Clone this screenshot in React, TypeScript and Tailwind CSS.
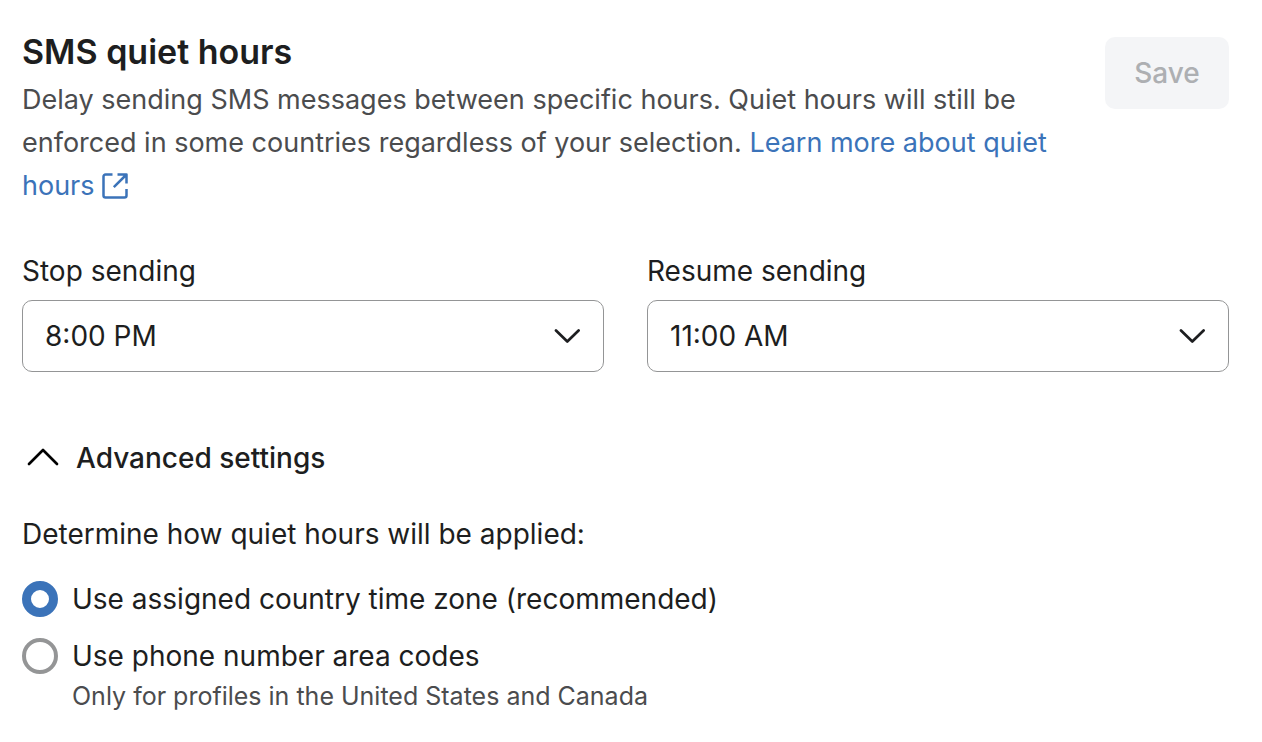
import React, { useState } from "react";

const times = ["8:00 PM", "9:00 PM", "10:00 PM", "8:00 AM", "9:00 AM", "11:00 AM"];

const TimeSelect = ({
  id,
  label,
  initial,
}: {
  id: string;
  label: string;
  initial: string;
}) => {
  const [value, setValue] = useState(initial);

  return (
    <div>
      <label htmlFor={id} className="block text-[28px] leading-9">
        {label}
      </label>
      <div className="relative mt-[11px]">
        <select
          id={id}
          value={value}
          onChange={(e) => setValue(e.target.value)}
          className="h-18 w-full appearance-none rounded-[10px] border border-[#949596] bg-white px-[22px] text-[28px]"
        >
          {times.map((time) => (
            <option key={time}>{time}</option>
          ))}
        </select>
        <svg
          viewBox="0 0 26 16"
          className="pointer-events-none absolute top-7 right-6 h-4 w-[26px]"
          fill="none"
          stroke="currentColor"
          strokeWidth="2.7"
          strokeLinecap="round"
          strokeLinejoin="round"
        >
          <path d="M2 2.5l11.3 11L24.6 2.5" />
        </svg>
      </div>
    </div>
  );
};

const RadioOption = ({
  id,
  label,
  hint,
  checked,
  onChange,
}: {
  id: string;
  label: string;
  hint?: string;
  checked: boolean;
  onChange: () => void;
}) => (
  <div className="flex items-start gap-[14px]">
    <input
      id={id}
      type="radio"
      name="zone"
      checked={checked}
      onChange={onChange}
      className="size-9 shrink-0 appearance-none rounded-full border-4 border-[#949596] bg-white checked:border-9 checked:border-[#3b73b9]"
    />
    <div>
      <label htmlFor={id} className="block text-[28px] leading-9">
        {label}
      </label>
      {hint && <p className="mt-1 text-[25px] leading-9 text-[#4b4c4e]">{hint}</p>}
    </div>
  </div>
);

export default function App() {
  const [open, setOpen] = useState(true);
  const [zone, setZone] = useState("country");

  return (
    <main className="bg-white pt-7 pr-[33px] pb-6 pl-[22px] font-['Inter',sans-serif] text-[#1d1e20]">
      <header className="flex items-start justify-between gap-8">
        <div>
          <h1 className="text-[34px] leading-12 font-semibold">SMS quiet hours</h1>
          <p className="mt-[2px] text-[27px] leading-[43px] text-[#4b4c4e]">
            Delay sending SMS messages between specific hours. Quiet hours will still be
            enforced in some countries regardless of your selection.{" "}
            <a href="#" className="text-[#3b73b9]">
              Learn more about quiet hours{" "}
              <svg
                viewBox="0 0 26 26"
                className="inline size-[26px] align-[-4px]"
                fill="none"
                stroke="currentColor"
                strokeWidth="2.5"
                strokeLinejoin="round"
              >
                <path d="M10.5 1.5H3.5a2 2 0 0 0-2 2v19a2 2 0 0 0 2 2h19a2 2 0 0 0 2-2v-6.5" />
                <path d="M15.5 1.5h9v9M24 2L11.8 14.2" />
              </svg>
            </a>
          </p>
        </div>
        <button
          type="button"
          disabled
          className="mt-[9px] h-18 w-31 shrink-0 rounded-[10px] bg-[#f4f5f7] text-[28px] font-medium text-[#adafb2]"
        >
          Save
        </button>
      </header>

      <div className="mt-[46px] grid grid-cols-2 gap-[43px]">
        <TimeSelect id="stop" label="Stop sending" initial="8:00 PM" />
        <TimeSelect id="resume" label="Resume sending" initial="11:00 AM" />
      </div>

      <button
        type="button"
        aria-expanded={open}
        onClick={() => setOpen(!open)}
        className="mt-17 flex items-center gap-4 pl-1 text-[28px] leading-9 font-medium"
      >
        <svg
          viewBox="0 0 34 20"
          className={open ? "h-5 w-[34px] text-black" : "h-5 w-[34px] rotate-180 text-black"}
          fill="none"
          stroke="currentColor"
          strokeWidth="2.7"
          strokeLinecap="round"
          strokeLinejoin="round"
        >
          <path d="M3 16L17 2l14 14" />
        </svg>
        Advanced settings
      </button>

      {open && (
        <fieldset className="mt-10">
          <legend className="text-[28px] leading-9">
            Determine how quiet hours will be applied:
          </legend>
          <div className="mt-[29px] flex flex-col gap-[21px]">
            <RadioOption
              id="country"
              label="Use assigned country time zone (recommended)"
              checked={zone === "country"}
              onChange={() => setZone("country")}
            />
            <RadioOption
              id="area"
              label="Use phone number area codes"
              hint="Only for profiles in the United States and Canada"
              checked={zone === "area"}
              onChange={() => setZone("area")}
            />
          </div>
        </fieldset>
      )}
    </main>
  );
}
